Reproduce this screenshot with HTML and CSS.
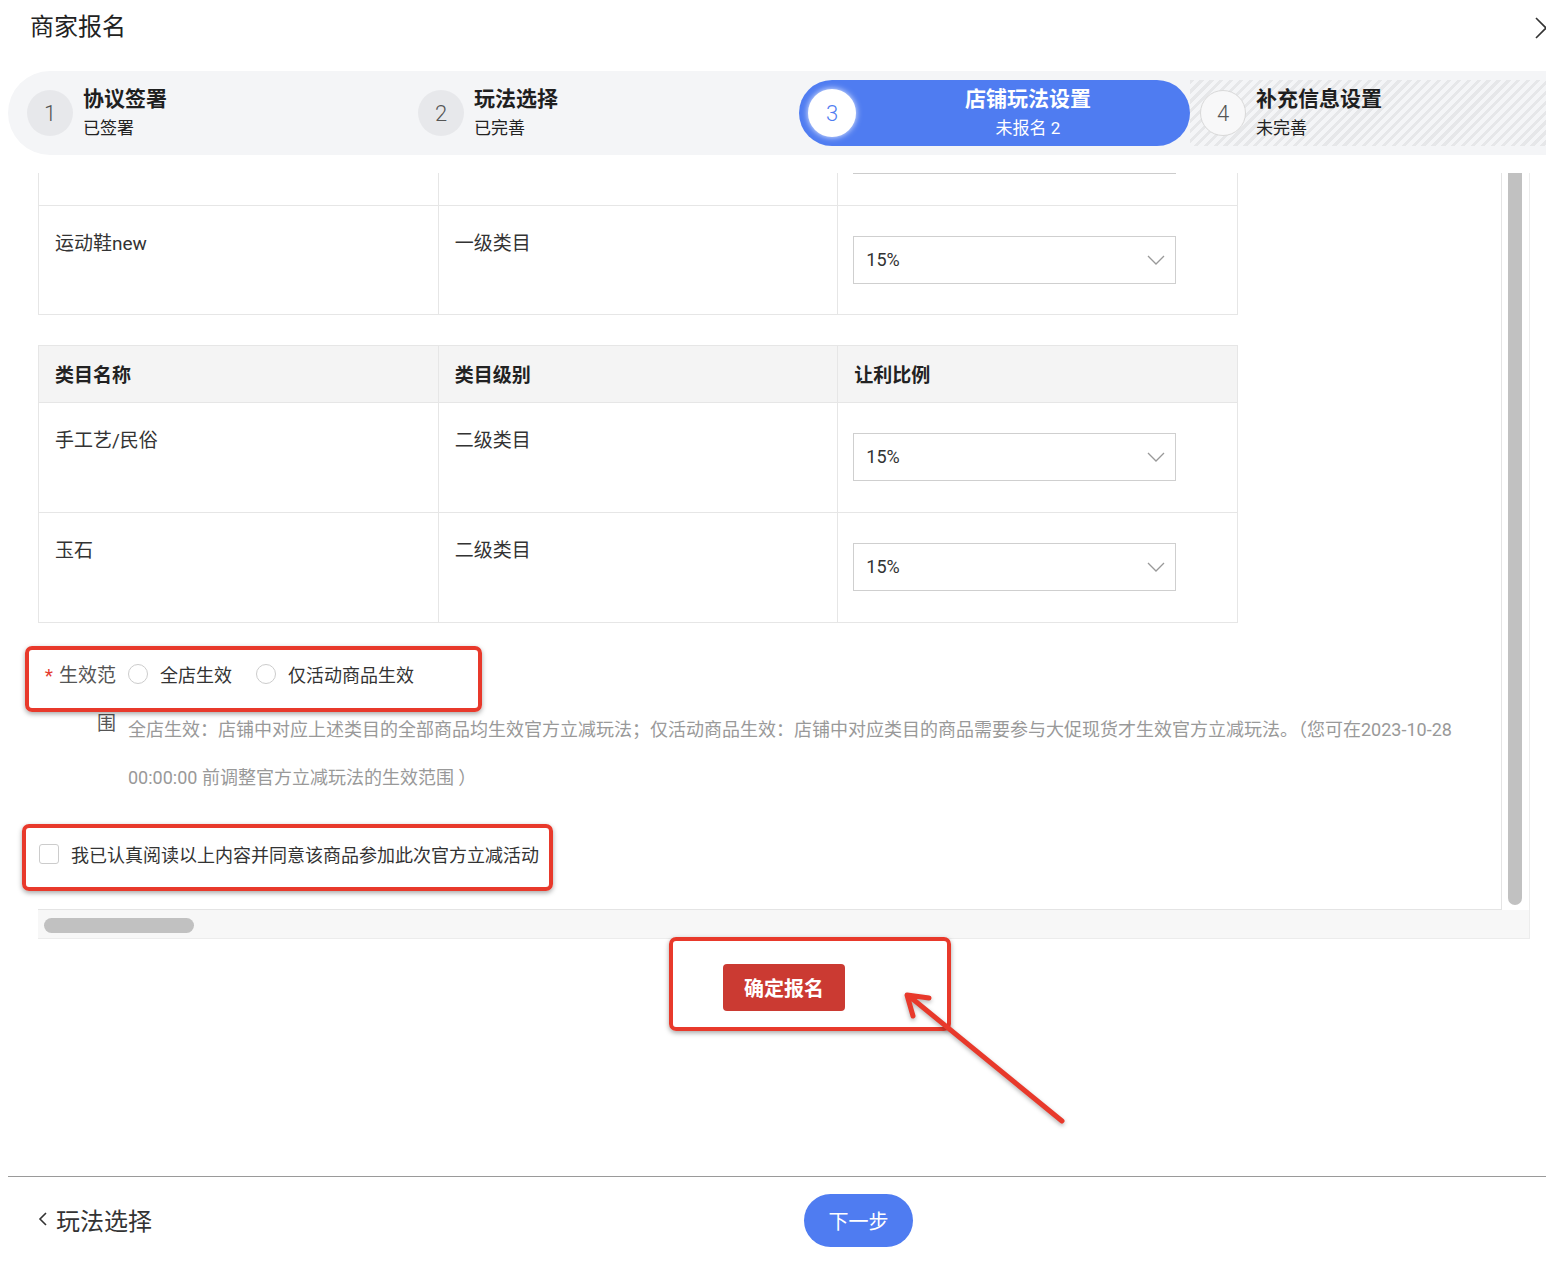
FILE: index.html
```html
<!DOCTYPE html>
<html lang="zh-CN">
<head>
  <meta charset="UTF-8">
  <meta name="viewport" content="width=device-width, initial-scale=1.0">
  <title>商家报名</title>
  <link rel="stylesheet" href="styles.css">
</head>
<body>
  <div class="modal">
    <div class="modal-head">
      <h2 class="modal-title">商家报名</h2>
      <span class="close">
        <svg width="22" height="22" viewBox="0 0 22 22"><path d="M1 1 L21 21 M21 1 L1 21" stroke="#333" stroke-width="1.6" fill="none"/></svg>
      </span>
    </div>

    <div class="steps">
      <div class="step">
        <span class="num">1</span>
        <div class="step-text">
          <div class="step-title">协议签署</div>
          <div class="step-sub">已签署</div>
        </div>
      </div>
      <div class="step">
        <span class="num">2</span>
        <div class="step-text">
          <div class="step-title">玩法选择</div>
          <div class="step-sub">已完善</div>
        </div>
      </div>
      <div class="step active">
        <span class="num">3</span>
        <div class="step-text">
          <div class="step-title">店铺玩法设置</div>
          <div class="step-sub">未报名 2</div>
        </div>
      </div>
      <div class="step todo">
        <span class="num">4</span>
        <div class="step-text">
          <div class="step-title">补充信息设置</div>
          <div class="step-sub">未完善</div>
        </div>
      </div>
    </div>

    <div class="scroll-box">
      <div class="scroll-main">
        <div class="scroll-view">
          <table class="cat-table first">
            <tbody>
              <tr class="cut">
                <td></td>
                <td></td>
                <td class="rate"><div class="select-edge"></div></td>
              </tr>
              <tr>
                <td>运动鞋new</td>
                <td>一级类目</td>
                <td class="rate">
                  <div class="rate-select">15%<svg width="18" height="10" viewBox="0 0 18 10"><polyline points="1,1 9,9 17,1" stroke="#999" stroke-width="1.3" fill="none"/></svg></div>
                </td>
              </tr>
            </tbody>
          </table>

          <table class="cat-table second">
            <thead>
              <tr>
                <th>类目名称</th>
                <th>类目级别</th>
                <th>让利比例</th>
              </tr>
            </thead>
            <tbody>
              <tr>
                <td>手工艺/民俗</td>
                <td>二级类目</td>
                <td class="rate">
                  <div class="rate-select">15%<svg width="18" height="10" viewBox="0 0 18 10"><polyline points="1,1 9,9 17,1" stroke="#999" stroke-width="1.3" fill="none"/></svg></div>
                </td>
              </tr>
              <tr>
                <td>玉石</td>
                <td>二级类目</td>
                <td class="rate">
                  <div class="rate-select">15%<svg width="18" height="10" viewBox="0 0 18 10"><polyline points="1,1 9,9 17,1" stroke="#999" stroke-width="1.3" fill="none"/></svg></div>
                </td>
              </tr>
            </tbody>
          </table>

          <div class="form-item">
            <div class="form-label"><span class="req">*</span>生效范围</div>
            <div class="form-body">
              <div class="radios">
                <label class="radio"><i></i>全店生效</label>
                <label class="radio"><i></i>仅活动商品生效</label>
              </div>
              <div class="help">全店生效：店铺中对应上述类目的全部商品均生效官方立减玩法；仅活动商品生效：店铺中对应类目的商品需要参与大促现货才生效官方立减玩法。（您可在2023-10-28 00:00:00 前调整官方立减玩法的生效范围 ）</div>
            </div>
          </div>

          <label class="agree"><i></i>我已认真阅读以上内容并同意该商品参加此次官方立减活动</label>
        </div>
        <div class="vbar"><div class="vthumb"></div></div>
      </div>
      <div class="hbar"><div class="hthumb"></div></div>
    </div>

    <div class="submit-row">
      <button class="btn-submit">确定报名</button>
    </div>

    <div class="modal-foot">
      <a class="back">
        <svg width="10" height="16" viewBox="0 0 10 16"><polyline points="8,2 2,8 8,14" stroke="#333" stroke-width="1.6" fill="none"/></svg>
        玩法选择
      </a>
      <button class="btn-next">下一步</button>
      <span></span>
    </div>
  </div>

  <div class="mark mark-scope"></div>
  <div class="mark mark-agree"></div>
  <div class="mark mark-submit"></div>
  <svg class="mark-arrow" width="1546" height="1274" viewBox="0 0 1546 1274">
    <path d="M1062 1121 L909 996 M929 998 L907 995 L913 1016" stroke="#e8392b" stroke-width="5" fill="none" stroke-linecap="round" stroke-linejoin="round"/>
  </svg>
</body>
</html>
```

FILE: styles.css
```css
* {
  box-sizing: border-box;
}
body {
  margin: 0;
  width: 1546px;
  height: 1274px;
  overflow: hidden;
  position: relative;
  background-color: #fff;
  font-family: Roboto, "Noto Sans CJK SC", sans-serif;
  color: #333;
}
.modal {
  width: 1701px;
  margin-left: 8px;
}
.modal-head {
  width: 1538px;
  height: 55px;
  display: flex;
  align-items: center;
  padding-left: 22px;
}
.modal-title {
  margin: 0;
  font-size: 24px;
  font-weight: 400;
  line-height: 55px;
  color: #222;
}
.close {
  margin-left: auto;
  margin-right: -11px;
  width: 22px;
  height: 22px;
}

/* steps */
.steps {
  margin-top: 16px;
  height: 84px;
  padding: 9px;
  background-color: #f4f5f7;
  border-radius: 42px 0 0 42px;
  display: flex;
}
.step {
  width: 391px;
  height: 66px;
  display: flex;
  align-items: center;
  padding-left: 10px;
}
.num {
  flex: none;
  width: 46px;
  height: 46px;
  border-radius: 50%;
  background-color: #e7e8eb;
  display: flex;
  align-items: center;
  justify-content: center;
  font-size: 22px;
  font-weight: 300;
  color: #555;
}
.step-text {
  margin-left: 10px;
}
.step-title {
  font-size: 21px;
  font-weight: 700;
  line-height: 28px;
  color: #1f1f1f;
}
.step-sub {
  margin-top: 1px;
  font-size: 17px;
  line-height: 28px;
  color: #222;
}
.step.active {
  background-color: #4f7cf1;
  border-radius: 33px;
  padding-left: 9px;
}
.step.active .num {
  width: 48px;
  height: 48px;
  background-color: #fff;
  color: #4f7cf1;
  box-shadow: 0 0 6px rgba(255, 255, 255, 0.9);
}
.step.active .step-text {
  flex: 1;
  margin-left: 0;
  padding-left: 10px;
  text-align: center;
}
.step.active .step-title,
.step.active .step-sub {
  color: #fff;
}
.step.todo {
  flex: 1;
  background: repeating-linear-gradient(135deg, #e6e7e9 0 3px, #f4f5f7 3px 7px);
}
.step.todo .num {
  background-color: #f8f8f9;
  border: 1px solid #d9d9d9;
}

/* scroll area */
.scroll-box {
  margin: 18px 0 0 30px;
  width: 1492px;
  border-right: 1px solid #ececec;
  border-bottom: 1px solid #ececec;
}
.scroll-main {
  display: flex;
  height: 737px;
}
.scroll-view {
  flex: 1;
  overflow: hidden;
  border-right: 1px solid #e4e4e4;
  border-bottom: 1px solid #e4e4e4;
}
.vbar {
  width: 27px;
  padding: 0 7px 5px 6px;
}
.vthumb {
  height: 100%;
  background-color: #c1c1c1;
  border-radius: 0 0 7px 7px;
}
.hbar {
  height: 28px;
  padding: 8px 6px;
  background-color: #f7f7f7;
}
.hthumb {
  width: 150px;
  height: 15px;
  border-radius: 8px;
  background-color: #c1c1c1;
}

/* tables */
.cat-table {
  width: 1200px;
  border-collapse: collapse;
  table-layout: fixed;
}
.cat-table th,
.cat-table td {
  border: 1px solid #e6e6e6;
  padding: 0 16px;
  text-align: left;
}
.cat-table th {
  height: 57px;
  background-color: #f4f4f4;
  font-size: 19px;
  font-weight: 700;
  color: #222;
  vertical-align: middle;
}
.cat-table td {
  height: 110px;
  padding-top: 24px;
  font-size: 19px;
  line-height: 28px;
  vertical-align: top;
}
.cat-table.first td {
  height: 109px;
}
.cat-table td.rate {
  padding: 0 0 0 15px;
  vertical-align: middle;
}
.cat-table .cut td {
  height: 32px;
  padding-top: 0;
  border-top: none;
  vertical-align: top;
}
.select-edge {
  width: 323px;
  height: 1px;
  background-color: #ccc;
}
.cat-table.second {
  margin-top: 30px;
}
.rate-select {
  width: 323px;
  height: 48px;
  border: 1px solid #cfcfcf;
  background-color: #fff;
  display: flex;
  align-items: center;
  justify-content: space-between;
  padding: 0 10px 0 12px;
  font-size: 18px;
  color: #333;
}

/* form */
.form-item {
  display: flex;
  margin-top: 29px;
  padding-left: 2px;
}
.form-label {
  flex: none;
  width: 76px;
  text-align: right;
  font-size: 19px;
  line-height: 48px;
  color: #555;
}
.req {
  color: #e43b2f;
  margin-right: 6px;
}
.form-body {
  flex: 1;
  margin-left: 12px;
}
.radios {
  display: flex;
  align-items: center;
  height: 48px;
  padding-bottom: 4px;
  font-size: 18px;
  color: #333;
}
.radio {
  display: flex;
  align-items: center;
  margin-right: 24px;
}
.radio i {
  width: 20px;
  height: 20px;
  border: 1px solid #ccc;
  border-radius: 50%;
  margin-right: 12px;
}
.help {
  margin-top: 6px;
  font-size: 18px;
  line-height: 48px;
  color: #999;
}
.agree {
  display: flex;
  align-items: center;
  height: 40px;
  margin-top: 32px;
  padding-left: 1px;
  font-size: 18px;
  color: #333;
}
.agree i {
  width: 20px;
  height: 20px;
  border: 1px solid #ccc;
  border-radius: 3px;
  margin-right: 12px;
}

/* buttons */
.submit-row {
  width: 1492px;
  margin-left: 30px;
  padding-top: 25px;
  text-align: center;
}
.btn-submit {
  width: 122px;
  height: 47px;
  border: 0;
  border-radius: 4px;
  background-color: #cb3a32;
  color: #fff;
  font-family: inherit;
  font-size: 20px;
  font-weight: 700;
}
.modal-foot {
  margin-top: 165px;
  padding-top: 17px;
  border-top: 1px solid #9a9a9a;
  display: grid;
  grid-template-columns: 1fr auto 1fr;
  align-items: center;
}
.back {
  display: flex;
  align-items: center;
  gap: 8px;
  padding-left: 30px;
  padding-bottom: 3px;
  font-size: 24px;
  color: #333;
}
.btn-next {
  width: 109px;
  height: 53px;
  border: 0;
  border-radius: 27px;
  background-color: #4f7cf1;
  color: #fff;
  font-family: inherit;
  font-size: 20px;
}

/* annotations */
.mark {
  position: absolute;
  border: 4px solid #e8392b;
  border-radius: 7px;
  box-shadow: 0 2px 5px rgba(0, 0, 0, 0.35);
}
.mark-scope {
  left: 25px;
  top: 646px;
  width: 457px;
  height: 66px;
}
.mark-agree {
  left: 22px;
  top: 824px;
  width: 531px;
  height: 67px;
}
.mark-submit {
  left: 669px;
  top: 937px;
  width: 282px;
  height: 94px;
}
.mark-arrow {
  position: absolute;
  left: 0;
  top: 0;
  pointer-events: none;
  filter: drop-shadow(0 2px 2px rgba(0, 0, 0, 0.3));
}
```
